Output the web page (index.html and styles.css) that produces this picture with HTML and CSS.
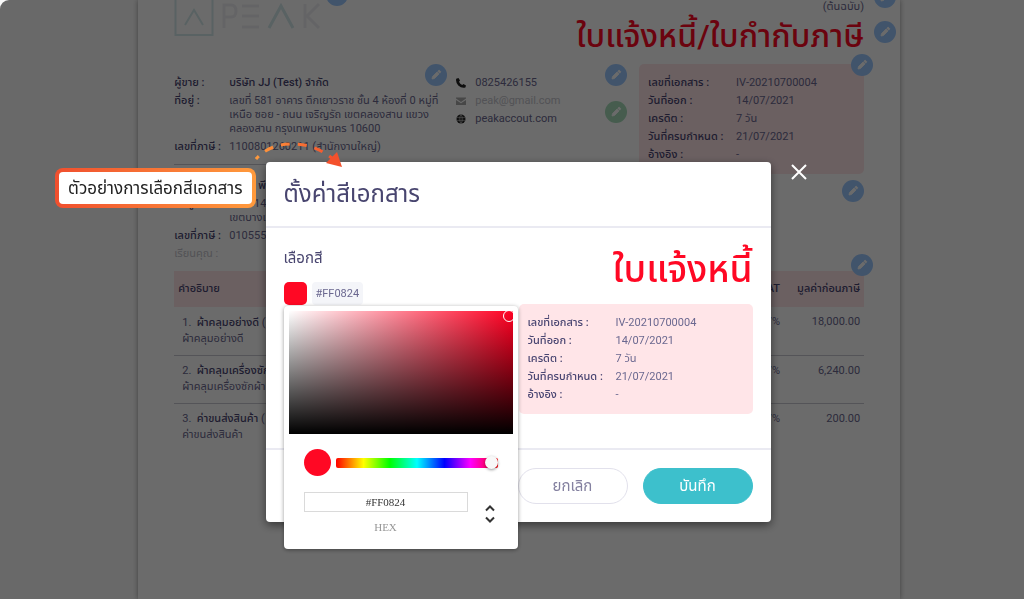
FILE: index.html
```html
<!DOCTYPE html>
<html lang="th">

<head>
    <meta charset="UTF-8">
    <meta name="viewport" content="width=device-width, initial-scale=1.0">
    <title>ตั้งค่าสีเอกสาร</title>
    <link rel="stylesheet" href="styles.css">
</head>

<body>
    <svg class="symbols" width="0" height="0">
        <symbol id="pencil" viewBox="0 0 22 22">
            <path d="M7 15L7.500 12.500L12 8L14 10L9.500 14.500zM12.800 7.200L13.500 6.500Q14.300 6 15 6.800L15.300 7.100Q16 7.800 15.400 8.500L14.700 9.200z" fill="#fff" stroke="#fff" stroke-width=".8" stroke-linejoin="round"/>
        </symbol>
    </svg>

    <main class="paper">
        <header class="top">
            <svg class="logo" width="150" height="38" viewBox="0 0 150 38" fill="none">
                <path d="M1.500-5V35H38.500V-5M11 25L20 10L29 25" stroke="#d5e9eb" stroke-width="2"/>
                <g stroke="#efeff2" stroke-width="3">
                    <path d="M50 28V5H57Q62 5 62 11T57 17H50"/>
                    <path d="M68 6H85M68 16H85M68 27H85"/>
                    <path d="M131 4V28M145 4L133 16L145 28"/>
                </g>
                <path d="M95 28L107 6L119 28" stroke="#d5e9eb" stroke-width="3"/>
            </svg>
            <button class="edit edit-logo" aria-label="แก้ไขโลโก้"><svg><use href="#pencil"/></svg></button>
            <div class="doc-title">
                <p>(ต้นฉบับ)</p>
                <h1>ใบแจ้งหนี้/ใบกำกับภาษี</h1>
                <button class="edit edit-copy" aria-label="แก้ไขต้นฉบับ"><svg><use href="#pencil"/></svg></button>
                <button class="edit edit-title" aria-label="แก้ไขชื่อเอกสาร"><svg><use href="#pencil"/></svg></button>
            </div>
        </header>

        <section class="info">
            <div class="parties">
                <div class="seller">
                    <dl class="party">
                        <dt>ผู้ขาย :</dt>
                        <dd><b>บริษัท JJ (Test) จำกัด</b></dd>
                        <dt>ที่อยู่ :</dt>
                        <dd>เลขที่ 581 อาคาร ตึกเยาวราช ชั้น 4 ห้องที่ 0 หมู่ที่<br>เหนือ ซอย - ถนน เจริญรัถ เขตคลองสาน แขวง<br>คลองสาน กรุงเทพมหานคร 10600</dd>
                        <dt>เลขที่ภาษี :</dt>
                        <dd>1100801260211 (สำนักงานใหญ่)</dd>
                    </dl>
                    <ul class="contact">
                        <li>
                            <svg width="10" height="10" viewBox="0 0 10 10"><path d="M2.500 0L4 2.600L3 3.800Q4 6 6.200 7L7.400 6L10 7.500L9.400 9.600Q5.500 10.600 2.300 7.500Q-.6 4.300.2.700z" fill="#222"/></svg>
                            0825426155
                        </li>
                        <li class="faded">
                            <svg width="10" height="10" viewBox="0 0 10 10"><path d="M0 1.500H10V2.500L5 6L0 2.500zM0 4L5 7.300L10 4V9H0z" fill="#aaa"/></svg>
                            peak@gmail.com
                        </li>
                        <li>
                            <svg width="10" height="10" viewBox="0 0 10 10"><circle cx="5" cy="5" r="4.500" fill="#222"/><path d="M0 3.500H10M0 6.500H10M5 0V10M5 .5Q1.500 5 5 9.500Q8.500 5 5 .5" stroke="#bbb" stroke-width=".6" fill="none"/></svg>
                            peakaccout.com
                        </li>
                    </ul>
                    <button class="edit edit-seller" aria-label="แก้ไขผู้ขาย"><svg><use href="#pencil"/></svg></button>
                    <button class="edit edit-phone" aria-label="แก้ไขเบอร์โทร"><svg><use href="#pencil"/></svg></button>
                    <button class="edit edit-mail" aria-label="แก้ไขอีเมล"><svg><use href="#pencil"/></svg></button>
                </div>
                <dl class="party buyer">
                    <dt>ลูกค้า :</dt>
                    <dd><b>บริษัท พีค</b></dd>
                    <dt>ที่อยู่ :</dt>
                    <dd>เลขที่ 14<br>เขตบางเขน</dd>
                    <dt>เลขที่ภาษี :</dt>
                    <dd>010555</dd>
                    <dt class="faded">เรียนคุณ :</dt>
                    <dd></dd>
                </dl>
            </div>
            <div class="side">
                <dl class="doc-info">
                    <dt>เลขที่เอกสาร :</dt>
                    <dd>IV-20210700004</dd>
                    <dt>วันที่ออก :</dt>
                    <dd>14/07/2021</dd>
                    <dt>เครดิต :</dt>
                    <dd>7 วัน</dd>
                    <dt>วันที่ครบกำหนด :</dt>
                    <dd>21/07/2021</dd>
                    <dt>อ้างอิง :</dt>
                    <dd>-</dd>
                </dl>
                <button class="edit edit-info" aria-label="แก้ไขข้อมูลเอกสาร"><svg><use href="#pencil"/></svg></button>
                <button class="edit edit-buyer" aria-label="แก้ไขลูกค้า"><svg><use href="#pencil"/></svg></button>
            </div>
        </section>

        <section class="items">
            <table>
                <thead>
                    <tr>
                        <th>คำอธิบาย</th>
                        <th class="num">VAT</th>
                        <th class="num total">มูลค่าก่อนภาษี</th>
                    </tr>
                </thead>
                <tbody>
                    <tr>
                        <td>1. &nbsp;<b>ผ้าคลุมอย่างดี</b> (<br>ผ้าคลุมอย่างดี</td>
                        <td class="num">7%</td>
                        <td class="num">18,000.00</td>
                    </tr>
                    <tr>
                        <td>2. &nbsp;<b>ผ้าคลุมเครื่องซัก</b><br>ผ้าคลุมเครื่องซักผ้า</td>
                        <td class="num">7%</td>
                        <td class="num">6,240.00</td>
                    </tr>
                    <tr>
                        <td>3. &nbsp;<b>ค่าขนส่งสินค้า</b> (<br>ค่าขนส่งสินค้า</td>
                        <td class="num">7%</td>
                        <td class="num">200.00</td>
                    </tr>
                </tbody>
            </table>
            <button class="edit edit-items" aria-label="แก้ไขตาราง"><svg><use href="#pencil"/></svg></button>
        </section>
    </main>

    <div class="overlay">
        <div class="modal" role="dialog" aria-labelledby="modal-title">
            <header class="modal-head">
                <h2 id="modal-title">ตั้งค่าสีเอกสาร</h2>
            </header>
            <div class="modal-body">
                <div class="pick">
                    <label for="hex">เลือกสี</label>
                    <div class="chosen">
                        <button class="swatch" aria-label="#FF0824"></button>
                        <span class="code">#FF0824</span>
                    </div>
                    <div class="picker">
                        <div class="shade"><span class="ring"></span></div>
                        <div class="hue">
                            <span class="dot"></span>
                            <input type="range" min="0" max="360" value="360" aria-label="Hue">
                        </div>
                        <div class="hex">
                            <div class="hex-field">
                                <input type="text" id="hex" value="#FF0824">
                                <span>HEX</span>
                            </div>
                            <button class="mode" aria-label="HEX / RGB">
                                <svg width="10" height="18" viewBox="0 0 10 18" fill="none" stroke="#333" stroke-width="2"><path d="M1 5.500L5 1.500L9 5.500M1 12.500L5 16.500L9 12.500"/></svg>
                            </button>
                        </div>
                    </div>
                </div>
                <div class="preview">
                    <h3>ใบแจ้งหนี้</h3>
                    <dl class="doc-info">
                        <dt>เลขที่เอกสาร :</dt>
                        <dd>IV-20210700004</dd>
                        <dt>วันที่ออก :</dt>
                        <dd>14/07/2021</dd>
                        <dt>เครดิต :</dt>
                        <dd>7 วัน</dd>
                        <dt>วันที่ครบกำหนด :</dt>
                        <dd>21/07/2021</dd>
                        <dt>อ้างอิง :</dt>
                        <dd>-</dd>
                    </dl>
                </div>
            </div>
            <footer class="modal-foot">
                <button class="btn">ยกเลิก</button>
                <button class="btn save">บันทึก</button>
            </footer>
            <button class="close" aria-label="ปิด">
                <svg width="18" height="18" viewBox="0 0 18 18" stroke="#fff" stroke-width="2"><path d="M2 2L16 16M16 2L2 16"/></svg>
            </button>
            <div class="callout">ตัวอย่างการเลือกสีเอกสาร</div>
            <svg class="arrow" width="90" height="28" viewBox="0 0 90 28" fill="none">
                <defs>
                    <linearGradient id="fire" x1="0" x2="1">
                        <stop offset="0" stop-color="#ff9a3c"/>
                        <stop offset="1" stop-color="#f4512c"/>
                    </linearGradient>
                </defs>
                <path d="M1 18Q14 3 38 3Q60 3 78 18" stroke="url(#fire)" stroke-width="3" stroke-dasharray="9 8" stroke-dashoffset="5"/>
                <path d="M82 11L87 26L71 22z" fill="#f4512c"/>
            </svg>
        </div>
    </div>
</body>

</html>
```
FILE: styles.css
```css
* {
    box-sizing: border-box;
    margin: 0;
    padding: 0;
}

body {
    height: 100vh;
    overflow: hidden;
    background-color: #fafafa;
    font-family: Roboto, "Noto Sans Thai", "Noto Sans", sans-serif;
    font-size: 11px;
    line-height: 14px;
    color: #6b6890;
}

button {
    border: none;
    cursor: pointer;
    font-family: inherit;
}

ul {
    list-style: none;
}

b,
dt,
th {
    font-weight: 500;
    color: #4a4672;
}

.symbols {
    position: absolute;
}

/* invoice page */

.paper {
    width: 74.4%;
    min-height: 100vh;
    margin-left: 13.5%;
    padding: 0 36px;
    background-color: white;
    box-shadow: 0 0 5px rgb(150, 150, 150);
}

.top {
    position: relative;
    display: flex;
    justify-content: space-between;
    height: 64px;
}

.doc-title {
    position: relative;
    text-align: right;
}

.doc-title h1 {
    font-size: 32px;
    line-height: 44px;
    font-weight: 500;
    color: #ff0824;
}

.info {
    display: flex;
    justify-content: space-between;
    gap: 36px;
    height: 207px;
}

.parties {
    flex: 1;
}

.seller {
    position: relative;
    display: flex;
    height: 101px;
    padding-top: 12px;
    border-bottom: 1px solid #c9c9d2;
}

.party {
    display: grid;
    grid-template-columns: 55px 1fr;
    row-gap: 4px;
    align-content: start;
    white-space: nowrap;
}

.seller .party {
    width: 282px;
}

.buyer {
    padding-top: 14px;
}

.faded,
.buyer .faded {
    color: #c4c4cc;
    font-weight: 400;
}

.contact li {
    display: flex;
    align-items: center;
    gap: 9px;
    margin-bottom: 4px;
}

.side {
    position: relative;
    width: 225px;
}

.doc-info {
    display: grid;
    grid-template-columns: 88px 1fr;
    row-gap: 4px;
    padding: 12px 9px;
    border-radius: 5px;
    background-color: #ffe5e8;
    white-space: nowrap;
}

.items {
    position: relative;
}

table {
    width: 100%;
    border-collapse: collapse;
}

th {
    height: 36px;
    padding: 0 4px;
    background-color: #ffe5e8;
    text-align: left;
}

td {
    height: 48px;
    padding: 0 4px 0 8px;
    border-bottom: 1px solid #c9c9d2;
    line-height: 16px;
    vertical-align: middle;
}

td.num {
    padding-top: 7px;
    vertical-align: top;
}

tr:last-child td {
    border: none;
}

.num {
    padding-right: 4px;
    text-align: right;
}

.total {
    width: 80px;
    white-space: nowrap;
}

.edit {
    position: absolute;
    width: 22px;
    height: 22px;
    border-radius: 50%;
    background-color: #9cc8ff;
}

.edit svg {
    display: block;
    width: 22px;
    height: 22px;
}

.edit-logo {
    left: 152px;
    top: -16px;
}

.edit-copy {
    right: -32px;
    top: -14px;
}

.edit-title {
    right: -32px;
    top: 21px;
}

.edit-seller {
    left: 251px;
    top: 0;
}

.edit-phone {
    right: -24px;
    top: 0;
}

.edit-mail {
    right: -24px;
    top: 37px;
    background-color: #a6dcba;
}

.edit-info {
    right: -9px;
    top: -10px;
}

.edit-buyer {
    right: 0;
    top: 116px;
}

.edit-items {
    right: -9px;
    top: -17px;
}

/* colour dialog */

.overlay {
    position: fixed;
    inset: 0;
    padding: 162px 0 0 12px;
    border-top-left-radius: 9px;
    background-color: rgba(0, 0, 0, 0.58);
}

.modal {
    position: relative;
    max-width: 505px;
    margin: 0 auto;
    border-radius: 4px;
    background-color: white;
    box-shadow: 0 3px 10px rgba(0, 0, 0, 0.5);
}

.modal-head {
    padding: 14px 18px;
    border-bottom: 2px solid #eaeaf2;
}

.modal-head h2 {
    font-size: 24px;
    line-height: 36px;
    font-weight: 400;
    color: #48456f;
}

.modal-body {
    display: flex;
    justify-content: space-between;
    height: 220px;
    padding: 18px;
}

.pick {
    position: relative;
}

.pick label {
    display: block;
    font-size: 15px;
    line-height: 24px;
    color: #48456f;
}

.chosen {
    display: flex;
    gap: 5px;
    margin-top: 12px;
}

.swatch {
    width: 23px;
    height: 23px;
    border-radius: 5px;
    background-color: #ff0824;
}

.code {
    padding: 0 4px;
    border-radius: 4px;
    background-color: #f4f5f9;
    line-height: 23px;
}

.picker {
    position: absolute;
    z-index: 1;
    top: 60px;
    left: 0;
    width: 234px;
    padding: 5px;
    border-radius: 4px;
    background-color: white;
    box-shadow: 0 1px 4px rgba(0, 0, 0, 0.4);
}

.shade {
    position: relative;
    overflow: hidden;
    height: 123px;
    background: linear-gradient(to top, black, transparent), linear-gradient(to right, white, #ff0022);
}

.ring {
    position: absolute;
    top: -1px;
    right: -2px;
    width: 12px;
    height: 12px;
    border: 1px solid white;
    border-radius: 50%;
}

.hue {
    display: flex;
    align-items: center;
    gap: 5px;
    padding: 15px 15px 0;
}

.dot {
    width: 27px;
    height: 27px;
    border-radius: 50%;
    background-color: #ff0824;
}

.hue input {
    flex: 1;
    min-width: 0;
    height: 10px;
    appearance: none;
    border-radius: 2px;
    background: linear-gradient(to right, #f00, #ff0 17%, #0f0 33%, #0ff 50%, #00f 67%, #f0f 83%, #f00);
}

.hue input::-webkit-slider-thumb {
    appearance: none;
    width: 13px;
    height: 13px;
    border-radius: 50%;
    background-color: #f8f8f8;
    box-shadow: 0 1px 3px rgba(0, 0, 0, 0.4);
}

.hex {
    display: flex;
    align-items: center;
    gap: 17px;
    padding: 16px 15px 10px;
}

.hex-field {
    width: 164px;
    font-family: "Liberation Serif", serif;
    text-align: center;
}

.hex-field input {
    display: block;
    width: 100%;
    height: 20px;
    border: 1px solid #dadada;
    font: 11px "Liberation Serif", serif;
    text-align: center;
    color: #333;
}

.hex-field span {
    display: block;
    margin-top: 8px;
    color: #969696;
}

.mode {
    margin-top: 2px;
    background: none;
}

.mode svg {
    display: block;
}

.preview {
    width: 234px;
}

.preview h3 {
    margin-bottom: 10px;
    font-size: 37px;
    line-height: 48px;
    font-weight: 500;
    text-align: right;
    color: #ff0824;
}

.modal-foot {
    display: flex;
    justify-content: flex-end;
    gap: 15px;
    padding: 18px;
    border-top: 2px solid #eaeaf2;
}

.btn {
    width: 110px;
    height: 36px;
    border: 1px solid #e2e1ec;
    border-radius: 18px;
    background-color: white;
    font-size: 15px;
    color: #8481a0;
}

.save {
    border-color: #3dc0cc;
    background-color: #3dc0cc;
    color: white;
}

.close {
    position: absolute;
    top: 1px;
    right: -37px;
    background: none;
}

.close svg {
    display: block;
}

.callout {
    position: absolute;
    top: 6px;
    right: 515px;
    padding: 4px 9px;
    border: 4px solid transparent;
    border-radius: 8px;
    background: linear-gradient(white, white) padding-box, linear-gradient(to right, #f04f2e, #ff9a3c) border-box;
    font-size: 17px;
    line-height: 24px;
    white-space: nowrap;
    color: #222;
}

.arrow {
    position: absolute;
    top: -21px;
    left: -11px;
}
```
